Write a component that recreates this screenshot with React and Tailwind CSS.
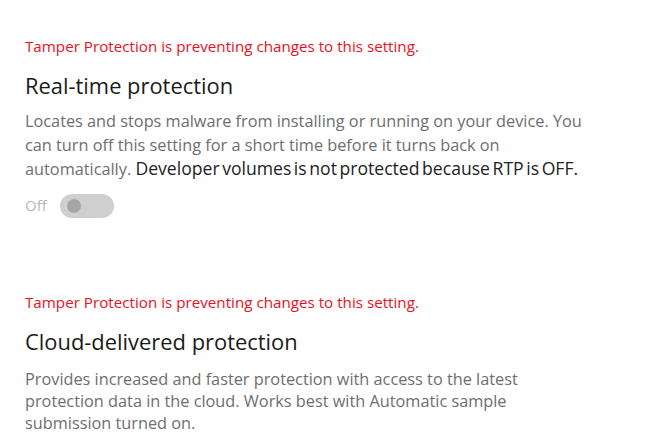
export default function App() {
  const seg = { fontFamily: '"Open Sans", "Noto Sans", sans-serif' };
  return (
    <div className="w-[654px] h-[444px] bg-white overflow-hidden" style={seg}>
      <div className="pl-[25px] pt-[36px]">
        <div className="text-[15.2px] leading-[20px] text-[#e81123]">
          Tamper Protection is preventing changes to this setting.
        </div>
        <div className="mt-[16px] text-[21.9px] leading-[28px] text-[#1a1a1a]">Real-time protection</div>
        <div className="mt-[10px] text-[16.3px] leading-[23.5px] text-[#6e6e6e]">
          Locates and stops malware from installing or running on your device. You
          <br />
          can turn off this setting for a short time before it turns back on
          <br />
          automatically.{" "}
          <span className="text-[#222226] text-[17.6px] [word-spacing:-2px]">
            Developer volumes is not protected because RTP is OFF.
          </span>
        </div>
        <div className="mt-[12px] flex items-center gap-[13px]">
          <span className="text-[15px] text-[#b8b8b8]">Off</span>
          <div className="w-[54px] h-[24px] rounded-full bg-[#cfcfcf] flex items-center pl-[7px]">
            <div className="w-[14px] h-[14px] rounded-full bg-[#a6a6a6]" />
          </div>
        </div>
        <div className="mt-[74px] text-[15.2px] leading-[20px] text-[#e81123]">
          Tamper Protection is preventing changes to this setting.
        </div>
        <div className="mt-[16px] text-[21.9px] leading-[28px] text-[#1a1a1a]">Cloud-delivered protection</div>
        <div className="mt-[12px] text-[16.3px] leading-[22px] text-[#6e6e6e]">
          Provides increased and faster protection with access to the latest
          <br />
          protection data in the cloud. Works best with Automatic sample
          <br />
          submission turned on.
        </div>
      </div>
    </div>
  );
}
